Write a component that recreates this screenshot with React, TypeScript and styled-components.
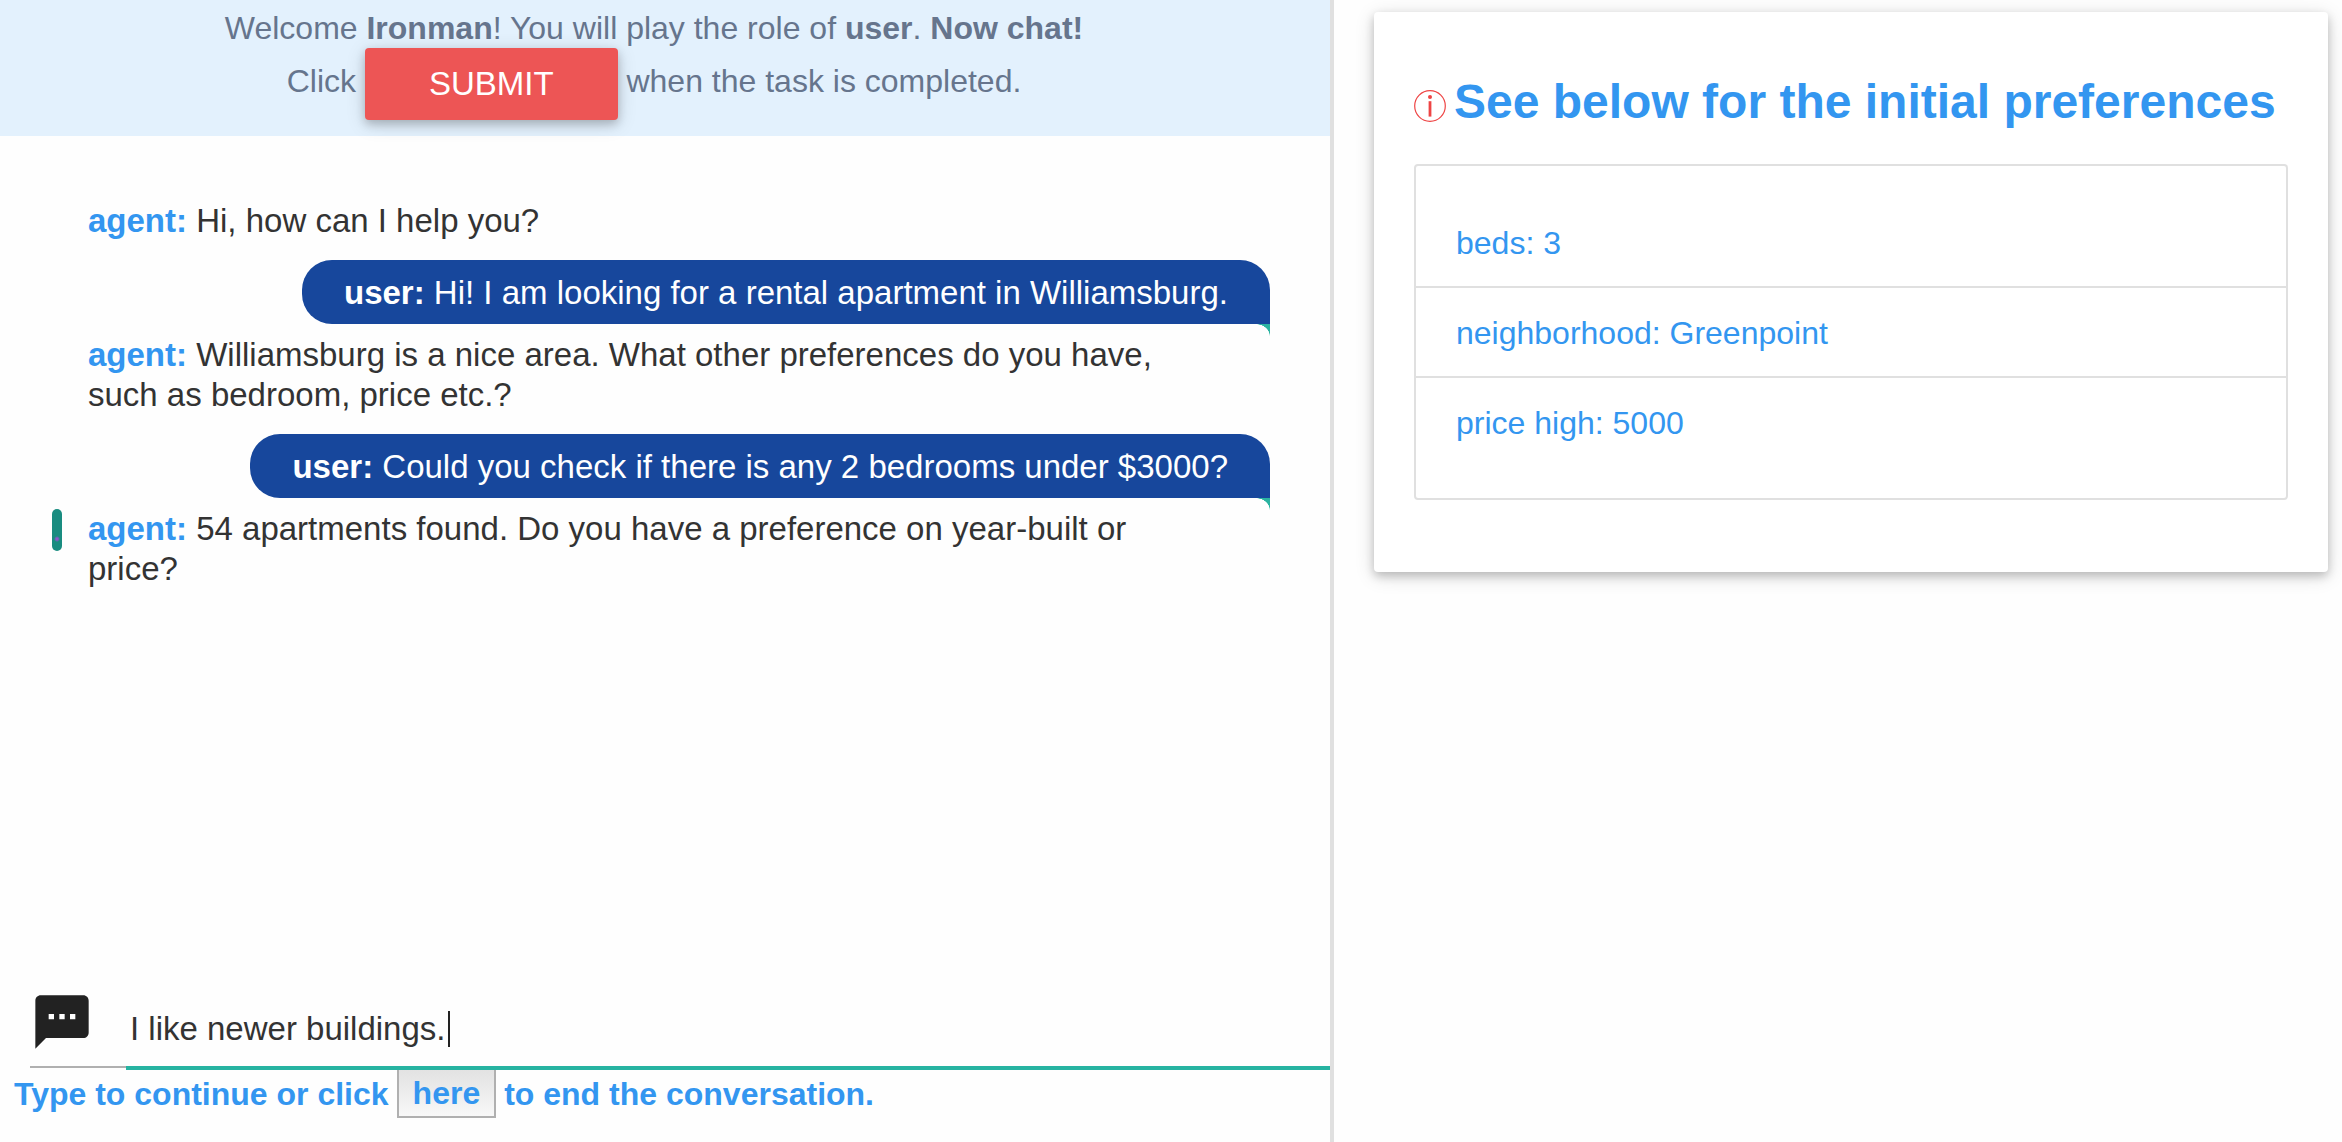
import React, { useState } from 'react';
import styled, { createGlobalStyle } from 'styled-components';

const blue = '#3396f0';
const line = '#e0e0e0';
const raised = '0 4px 10px rgba(0, 0, 0, 0.2), 0 4px 20px rgba(0, 0, 0, 0.14)';

const GlobalStyle = createGlobalStyle`
  *, *::before, *::after { box-sizing: border-box; }
  body {
    margin: 0;
    background: #fefefe;
    color: #333333;
    font: 32px/40px "Liberation Sans", Arial, sans-serif;
  }
  button, input { font: inherit; }
`;

const Page = styled.div`
  display: grid;
  grid-template-columns: 1334fr 1008fr;
  min-height: 100vh;
`;

const ChatColumn = styled.main`
  display: flex;
  flex-direction: column;
  border-right: 4px solid ${line};
`;

const Banner = styled.header`
  padding: 8px 22px 16px 0;
  background: #e3f1fd;
  color: #66758d;
  text-align: center;

  p { margin: 0; }
`;

const SubmitButton = styled.button`
  height: 72px;
  padding: 0 64px;
  border: 0;
  border-radius: 4px;
  background: #ed5555;
  color: #ffffff;
  font-size: 33px;
  vertical-align: middle;
  cursor: pointer;
  box-shadow: ${raised};
`;

const Messages = styled.section`
  flex: 1;
  display: flex;
  flex-direction: column;
  padding: 65px 60px 0 88px;
  font-size: 33px;
`;

const AgentMessage = styled.p<{ $latest?: boolean }>`
  position: relative;
  max-width: 1100px;
  margin: 0;

  strong { color: ${blue}; }

  &::before {
    content: ${({ $latest }) => ($latest ? '""' : 'none')};
    position: absolute;
    left: -36px;
    top: 0;
    width: 10px;
    height: 42px;
    border-radius: 5px;
    background: radial-gradient(circle at 5px 30px, #9055cc 1px, #198c80 3px);
  }
`;

const UserMessage = styled.p`
  position: relative;
  align-self: flex-end;
  margin: 19px 0 11px;
  padding: 13px 42px 11px;
  border-radius: 30px 30px 0 30px;
  background: #17479c;
  color: #ffffff;

  &::after {
    content: "";
    position: absolute;
    right: 0;
    top: 100%;
    width: 14px;
    height: 12px;
    background: radial-gradient(ellipse 14px 12px at 0 100%, transparent 96%, #2bb3a1 100%);
  }
`;

const Composer = styled.label`
  display: flex;
  align-items: stretch;
  height: 80px;
  margin-left: 30px;
`;

const ComposerIcon = styled.span`
  width: 96px;
  border-bottom: 2px solid #b0b0b0;
  height: 78px;

  svg { display: block; }
`;

const ComposerField = styled.span`
  flex: 1;
  display: flex;
  align-items: center;
  padding: 2px 0 0 4px;
  border-bottom: 4px solid #26b3a1;
  font-size: 33px;
`;

const TextInput = styled.input`
  field-sizing: content;
  padding: 0;
  border: 0;
  outline: 0;
  background: transparent;
  color: inherit;
  caret-color: transparent;
`;

const Caret = styled.span`
  width: 2px;
  height: 36px;
  margin-left: 2px;
  background: #222222;
`;

const Footer = styled.footer`
  display: flex;
  align-items: center;
  gap: 8px;
  padding: 0 14px 24px;
  color: ${blue};
  font-weight: bold;
`;

const HereButton = styled.button`
  height: 48px;
  padding: 0 14px;
  border: 2px solid #b0b0b0;
  border-top: 0;
  background: linear-gradient(#e2e2e2, #f8f8f8);
  color: inherit;
  cursor: pointer;
`;

const SideColumn = styled.aside`
  padding: 12px 14px 24px 40px;
`;

const Card = styled.section`
  padding: 60px 40px 72px;
  border-radius: 4px;
  background: #ffffff;
  box-shadow: ${raised};
`;

const CardTitle = styled.h1`
  display: flex;
  align-items: center;
  gap: 8px;
  margin: 0 0 32px;
  color: ${blue};
  font-size: 48px;
  line-height: 60px;
  white-space: nowrap;

  svg { flex: none; margin-top: 8px; }
`;

const PreferenceList = styled.ul`
  margin: 0;
  padding: 32px 0;
  border: 2px solid ${line};
  border-radius: 4px;
  list-style: none;
`;

const Preference = styled.li`
  padding: 25px 40px 23px;
  color: ${blue};

  & + & { border-top: 2px solid ${line}; }
`;

const SmsIcon = () => (
  <svg width="64" height="64" viewBox="0 0 24 24" fill="#222222" aria-hidden="true">
    <path d="M20 2H4c-1.1 0-1.99.9-1.99 2L2 22l4-4h14c1.1 0 2-.9 2-2V4c0-1.1-.9-2-2-2zM9 11H7V9h2v2zm4 0h-2V9h2v2zm4 0h-2V9h2v2z" />
  </svg>
);

const InfoIcon = () => (
  <svg width="32" height="32" viewBox="0 0 32 32" fill="none" aria-hidden="true">
    <circle cx="16" cy="16" r="15.3" stroke="#ee4444" strokeWidth="1.2" />
    <circle cx="16" cy="7" r="2" fill="#ee4444" />
    <path d="M16 11.2v15.4" stroke="#ee4444" strokeWidth="2.8" />
  </svg>
);

const messages = [
  { from: 'agent', text: 'Hi, how can I help you?' },
  { from: 'user', text: 'Hi! I am looking for a rental apartment in Williamsburg.' },
  { from: 'agent', text: 'Williamsburg is a nice area. What other preferences do you have, such as bedroom, price etc.?' },
  { from: 'user', text: 'Could you check if there is any 2 bedrooms under $3000?' },
  { from: 'agent', text: '54 apartments found. Do you have a preference on year-built or price?' },
];

const preferences = ['beds: 3', 'neighborhood: Greenpoint', 'price high: 5000'];

export default function App() {
  const [draft, setDraft] = useState('I like newer buildings.');

  return (
    <>
      <GlobalStyle />
      <Page>
        <ChatColumn>
          <Banner>
            <p>
              Welcome <strong>Ironman</strong>! You will play the role of <strong>user</strong>. <strong>Now chat!</strong>
            </p>
            <p>
              Click <SubmitButton type="button">SUBMIT</SubmitButton> when the task is completed.
            </p>
          </Banner>
          <Messages>
            {messages.map(({ from, text }, i) =>
              from === 'agent' ? (
                <AgentMessage key={i} $latest={i === messages.length - 1}>
                  <strong>agent:</strong> {text}
                </AgentMessage>
              ) : (
                <UserMessage key={i}>
                  <strong>user:</strong> {text}
                </UserMessage>
              ),
            )}
          </Messages>
          <Composer>
            <ComposerIcon>
              <SmsIcon />
            </ComposerIcon>
            <ComposerField>
              <TextInput aria-label="Message" value={draft} onChange={(e) => setDraft(e.target.value)} />
              <Caret />
            </ComposerField>
          </Composer>
          <Footer>
            <span>Type to continue or click</span>
            <HereButton type="button">here</HereButton>
            <span>to end the conversation.</span>
          </Footer>
        </ChatColumn>
        <SideColumn>
          <Card>
            <CardTitle>
              <InfoIcon />
              See below for the initial preferences
            </CardTitle>
            <PreferenceList>
              {preferences.map((item) => (
                <Preference key={item}>{item}</Preference>
              ))}
            </PreferenceList>
          </Card>
        </SideColumn>
      </Page>
    </>
  );
}
